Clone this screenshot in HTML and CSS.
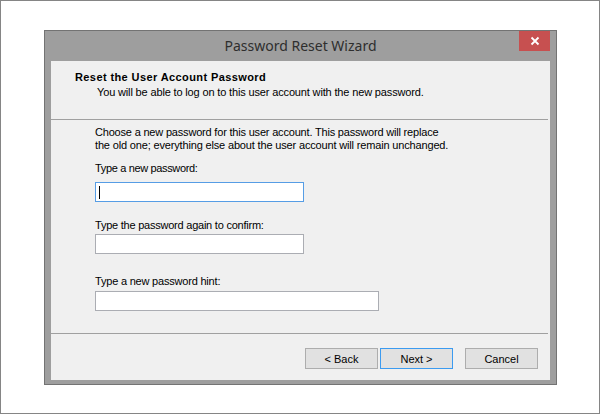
FILE: index.html
```html
<!DOCTYPE html>
<html>
<head>
<meta charset="utf-8">
<link rel="stylesheet" href="styles.css">
</head>
<body>
<div class="page">
  <div class="dialog">
    <div class="titlebar">
      <span class="spacer"></span>
      <span class="title">Password Reset Wizard</span>
      <span class="close-wrap">
        <span class="close">
          <svg width="10" height="10" viewBox="0 0 10 10"><path d="M1.5 1.5 L8.5 8.5 M8.5 1.5 L1.5 8.5" stroke="#fff" stroke-width="1.8" fill="none"/></svg>
        </span>
      </span>
    </div>
    <div class="client">
      <div class="header">
        <div class="h-title">Reset the User Account Password</div>
        <div class="h-sub">You will be able to log on to this user account with the new password.</div>
      </div>
      <div class="body">
        <p class="intro"><span class="line1">Choose a new password for this user account. This password will replace</span><br><span class="line2">the old one; everything else about the user account will remain unchanged.</span></p>
        <div class="label l1">Type a new password:</div>
        <div class="textbox focused t1"><span class="caret"></span></div>
        <div class="label l2">Type the password again to confirm:</div>
        <div class="textbox t2"></div>
        <div class="label l3">Type a new password hint:</div>
        <div class="textbox wide t3"></div>
      </div>
      <div class="footer">
        <button class="btn">&lt; Back</button>
        <button class="btn default">Next &gt;</button>
        <button class="btn cancel">Cancel</button>
      </div>
    </div>
  </div>
</div>
</body>
</html>
```
FILE: styles.css
```css
html, body {
  margin: 0;
  padding: 0;
}
body {
  width: 600px;
  height: 414px;
  overflow: hidden;
  background: #fff;
}
.page {
  box-sizing: border-box;
  width: 600px;
  height: 414px;
  border: 1px solid #858585;
  padding: 29px 0 0 43px;
  font-family: "Liberation Sans", Arial, sans-serif;
  font-size: 11px;
  color: #000;
}
.dialog {
  box-sizing: border-box;
  width: 513px;
  height: 355px;
  border: 1px solid #737373;
  background: #9e9e9e;
  display: flex;
  flex-direction: column;
}
.titlebar {
  height: 30px;
  display: grid;
  grid-template-columns: 1fr auto 1fr;
}
.title {
  font-family: "Noto Sans", "Liberation Sans", sans-serif;
  font-size: 14px;
  color: #2e2e2e;
  line-height: 29px;
}
.close-wrap {
  display: flex;
  justify-content: flex-end;
  align-items: flex-start;
  padding-right: 6px;
}
.close {
  width: 31px;
  height: 20px;
  background: #c75050;
  display: flex;
  align-items: center;
  justify-content: center;
}
.client {
  margin: 0 6px 0 6px;
  height: 319px;
  background: #f0f0f0;
  display: flex;
  flex-direction: column;
}
.header {
  height: 59px;
  box-sizing: border-box;
  padding: 10px 0 0 24px;
  border-bottom: 1px solid #a0a0a0;
  margin-right: 2px;
}
.h-title {
  font-weight: bold;
  line-height: 13px;
  letter-spacing: 0.4px;
}
.h-sub {
  line-height: 13px;
  padding-left: 22px;
  margin-top: 2px;
  letter-spacing: -0.15px;
}
.body {
  flex: 1;
  padding: 6px 0 0 44px;
  border-bottom: 1px solid #a0a0a0;
  margin-right: 2px;
}
.intro {
  margin: 0;
  line-height: 13px;
}
.line1 {
  letter-spacing: -0.19px;
}
.line2 {
  letter-spacing: -0.16px;
}
.label {
  line-height: 13px;
}
.l1 { margin-top: 10px; letter-spacing: -0.35px; }
.l2 { margin-top: 17px; letter-spacing: -0.23px; }
.l3 { margin-top: 21px; letter-spacing: -0.2px; }
.textbox {
  box-sizing: border-box;
  width: 209px;
  height: 20px;
  background: #fff;
  border: 1px solid #abadb3;
  display: flex;
  align-items: center;
}
.t1 { margin-top: 7px; }
.t2 { margin-top: 2px; }
.t3 { margin-top: 3px; }
.textbox.focused {
  border-color: #569de5;
}
.textbox.wide {
  width: 284px;
}
.caret {
  width: 1px;
  height: 13px;
  background: #000;
  margin-left: 3px;
}
.footer {
  height: 46px;
  box-sizing: border-box;
  padding: 14px 12px 0 0;
  display: flex;
  justify-content: flex-end;
  align-items: flex-start;
  gap: 2px;
}
.btn {
  box-sizing: border-box;
  width: 73px;
  height: 21px;
  margin: 0;
  padding: 0;
  font-family: "Liberation Sans", Arial, sans-serif;
  font-size: 11px;
  color: #000;
  background: #e1e1e1;
  border: 1px solid #adadad;
  border-radius: 0;
}
.btn.default {
  border-color: #3c9bf0;
}
.btn.cancel {
  margin-left: 10px;
}
```
